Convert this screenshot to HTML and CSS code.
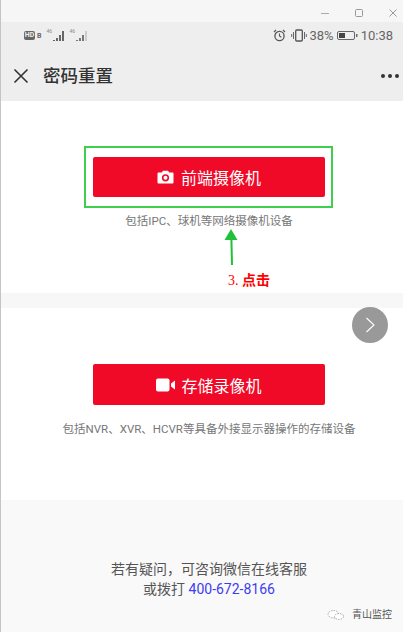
FILE: index.html
```html
<!DOCTYPE html>
<html lang="zh">
<head>
<meta charset="utf-8">
<title>密码重置</title>
<link rel="stylesheet" href="styles.css">
</head>
<body>
<div class="app">
  <div class="titlebar">
    <svg class="win" width="10" height="10" viewBox="0 0 10 10"><path d="M1 5.5h8" stroke="#aaa" fill="none"/></svg>
    <svg class="win" width="10" height="10" viewBox="0 0 10 10"><rect x="1.5" y="1.5" width="7" height="7" rx="1" stroke="#999" fill="none"/></svg>
    <svg class="win" width="10" height="10" viewBox="0 0 10 10"><path d="M1.5 1.5l7 7M8.5 1.5l-7 7" stroke="#999" fill="none"/></svg>
  </div>
  <header class="head">
    <div class="status">
      <div class="status-left">
        <span class="hd">HD</span>
        <span class="hd-b">B</span>
        <span class="sig"><span class="g">46</span><svg width="14" height="12" viewBox="0 0 14 12"><path d="M1 10h2v1H1zM4 8h2v3H4zM7 5h2v6H7zM10 1h2v10h-2z" fill="#666"/></svg></span>
        <span class="sig"><span class="g">46</span><svg width="14" height="12" viewBox="0 0 14 12"><path d="M1 10h2v1H1zM4 8h2v3H4zM7 5h2v6H7z" fill="#777"/><path d="M10 1h2v10h-2z" fill="#ccc"/></svg></span>
      </div>
      <div class="status-right">
        <svg width="13" height="13" viewBox="0 0 13 13"><circle cx="6.5" cy="7" r="4.6" fill="none" stroke="#555" stroke-width="1.3"/><path d="M6.5 4.5V7l1.8 1.2M1 3l2-2M12 3l-2-2" fill="none" stroke="#555" stroke-width="1.1"/></svg>
        <svg class="vib" width="16" height="13" viewBox="0 0 16 13"><rect x="4.7" y="1" width="6.6" height="11" rx="1" fill="none" stroke="#555" stroke-width="1.3"/><path d="M2.5 3v7M.7 5v3M13.5 3v7M15.3 5v3" stroke="#666" fill="none"/></svg>
        <span>38%</span>
        <svg width="21" height="11" viewBox="0 0 21 11"><rect x=".5" y="1.5" width="17" height="8" rx="1.5" fill="none" stroke="#666"/><rect x="2" y="3" width="6" height="5" fill="#444"/><rect x="19" y="4" width="1.5" height="3" fill="#666"/></svg>
        <span>10:38</span>
      </div>
    </div>
    <div class="nav">
      <svg class="close" width="16" height="16" viewBox="0 0 16 16"><path d="M1.5 1.5l13 13M14.5 1.5l-13 13" stroke="#333" stroke-width="1.6" fill="none"/></svg>
      <h1>密码重置</h1>
      <div class="dots"><i></i><i></i><i></i></div>
    </div>
  </header>
  <main>
    <section class="panel first">
      <div class="highlight">
        <button class="btn" type="button">
          <svg width="17" height="14" viewBox="0 0 17 14"><path fill-rule="evenodd" fill="#fff" d="M1.5 2.5h3.3L6 .7h5l1.2 1.8h3.3a1 1 0 0 1 1 1v9a1 1 0 0 1-1 1h-14a1 1 0 0 1-1-1v-9a1 1 0 0 1 1-1zM8.5 4.2a3.6 3.6 0 1 0 0 7.2 3.6 3.6 0 0 0 0-7.2zM8.5 5.8a2 2 0 1 1 0 4 2 2 0 0 1 0-4z"/></svg>
          <span>前端摄像机</span>
        </button>
      </div>
      <p class="cap">包括IPC、球机等网络摄像机设备</p>
      <svg class="arrow" width="16" height="40" viewBox="0 0 16 40"><path d="M8.4 10L9 37" stroke="#22c03a" stroke-width="2" fill="none"/><path d="M1.5 12L8 1l6.5 11z" fill="#22c03a"/></svg>
      <div class="note"><span class="num">3.</span> 点击</div>
    </section>
    <section class="panel second">
      <button class="next" type="button" aria-label="下一步"><svg width="12" height="18" viewBox="0 0 12 18"><path d="M2.5 2l7.5 7-7.5 7" stroke="#fff" stroke-width="1.1" fill="none"/></svg></button>
      <button class="btn" type="button">
        <svg width="20" height="14" viewBox="0 0 20 14"><rect y=".5" width="13.5" height="13" rx="2" fill="#fff"/><path d="M15 5.5l4-3v9l-4-3z" fill="#fff"/></svg>
        <span>存储录像机</span>
      </button>
      <p class="cap">包括NVR、XVR、HCVR等具备外接显示器操作的存储设备</p>
    </section>
    <footer class="foot">
      <p>若有疑问，可咨询微信在线客服</p>
      <p>或拨打 <a class="tel">400-672-8166</a></p>
      <div class="mark">
        <svg width="18" height="12" viewBox="0 0 24 14"><ellipse cx="8.5" cy="6" rx="7" ry="5" fill="#fff" stroke="#888" stroke-dasharray="2 1.5"/><ellipse cx="16" cy="9" rx="6" ry="4" fill="#fff" stroke="#888" stroke-dasharray="2 1.5"/></svg>
        <span>青山监控</span>
      </div>
    </footer>
  </main>
</div>
</body>
</html>
```
FILE: styles.css
```css
* { box-sizing: border-box; margin: 0; padding: 0; }
html, body { height: 100%; }
body { font-family: "Roboto", "Noto Sans CJK SC", sans-serif; background: #fff; overflow: hidden; }
.app { width: 403px; height: 632px; display: flex; flex-direction: column; border-left: 1px solid #c4c4c4; }
.titlebar { height: 22px; background: #f6f6f6; display: flex; justify-content: flex-end; align-items: center; gap: 24px; padding-right: 5px; padding-top: 4px; }
.head { height: 79px; background: #eeeeee; display: flex; flex-direction: column; flex: none; }
.status { height: 33px; display: flex; justify-content: space-between; align-items: center; padding: 0 10px 6px 23px; }
.status-left, .status-right { display: flex; align-items: center; }
.status-right { gap: 3px; font-size: 13px; color: #666; }
.status-right .vib { margin-left: 2px; margin-right: -1px; }
.hd { background: #666; color: #eee; border-radius: 2px; font-size: 7px; font-weight: 700; width: 11px; height: 9px; line-height: 9px; text-align: center; overflow: hidden; }
.hd-b { font-size: 7px; color: #666; margin: 0 5px 0 2px; font-weight: 700; }
.sig { display: flex; align-items: flex-end; margin-right: 3px; position: relative; width: 20px; height: 13px; justify-content: flex-end; }
.sig .g { position: absolute; left: 0; top: -1px; font-size: 5px; line-height: 6px; color: #888; }
.nav { height: 46px; display: flex; align-items: center; padding: 0 4px 5px 12px; }
.close { flex: none; }
.nav h1 { font-size: 17.5px; font-weight: 500; color: #333; margin-left: 14px; line-height: 24px; flex: 1; }
.dots { display: flex; gap: 3px; }
.dots i { width: 4px; height: 4px; border-radius: 50%; background: #333; }
main { flex: 1; display: flex; flex-direction: column; background: #f7f7f7; }
.panel { position: relative; background: #fff; display: flex; flex-direction: column; align-items: center; padding: 0 2px 0 16px; }
.first { height: 192px; padding-top: 56px; }
.second { height: 192px; margin-top: 15px; padding-top: 56px; }
.highlight { position: relative; }
.highlight::before { content: ""; position: absolute; left: -9px; right: -8px; top: -11px; bottom: -11px; border: 2px solid #3fcf4c; }
.btn { width: 232px; height: 41px; border: 0; border-radius: 2px; background: #f00a28; color: #fff; font: inherit; font-size: 16px; display: flex; align-items: center; justify-content: center; gap: 7px; position: relative; }
.first .btn { height: 40px; }
.second .btn { gap: 5px; }
.cap { font-size: 11.5px; line-height: 16px; color: #777; text-align: center; margin-top: 16px; }
.second .cap { margin-top: 15px; padding-top: 1px; }
.arrow { position: absolute; left: 222px; top: 127px; }
.note { position: absolute; left: 227px; top: 171px; font-family: "Liberation Serif", "Noto Sans CJK SC", serif; font-size: 14px; line-height: 18px; color: #f00; font-weight: 700; }
.note .num { font-weight: 400; }
.next { position: absolute; left: 351px; top: -1px; width: 36px; height: 36px; border-radius: 50%; border: 0; background: #999; display: flex; align-items: center; justify-content: center; }
.foot { flex: 1; position: relative; padding: 59px 2px 0 16px; text-align: center; font-size: 14px; line-height: 20px; color: #555; background: #f9f9f9; }
.tel { color: #3d3df0; }
.mark { position: absolute; right: 11px; bottom: 10px; display: flex; align-items: center; gap: 7px; font-size: 10px; color: #555; line-height: 14px; }
```
